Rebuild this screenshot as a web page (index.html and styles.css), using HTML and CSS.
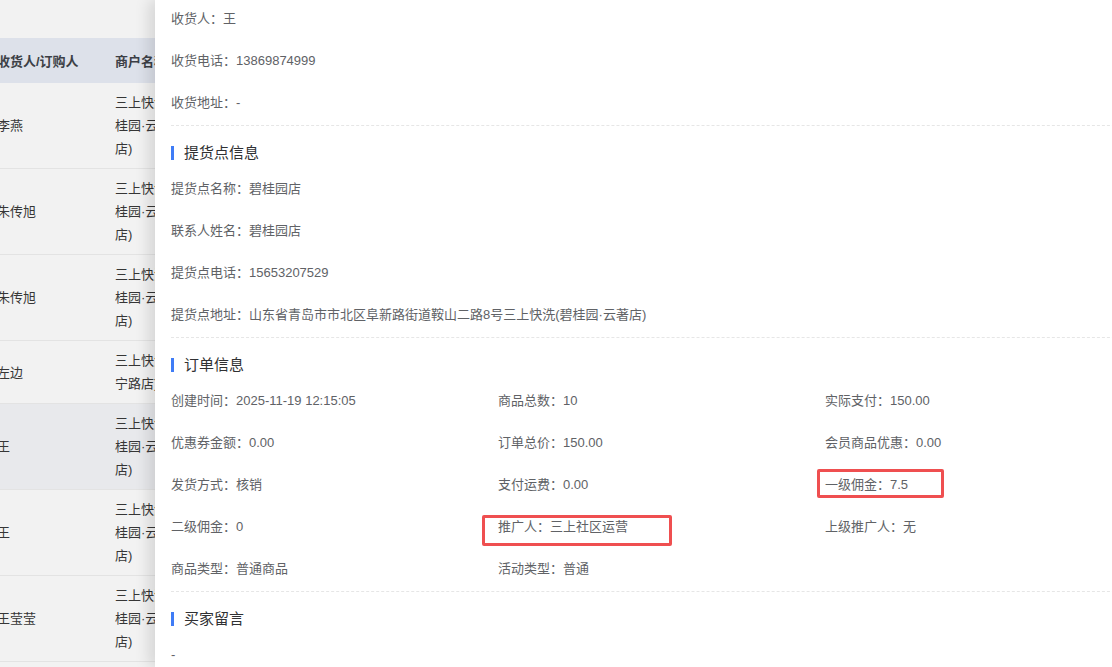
FILE: index.html
```html
<!DOCTYPE html>
<html lang="zh-CN">
  <head>
    <meta charset="UTF-8" />
    <meta name="viewport" content="width=device-width, initial-scale=1.0" />
    <title>订单详情</title>

    <link rel="stylesheet" href="styles.css">
  </head>
  <body>
    <div class="page">
      <table class="orderTable">
        <thead>
          <tr>
            <th class="col-name">收货人/订购人</th>
            <th class="col-shop">商户名称</th>
          </tr>
        </thead>
        <tbody>
          <tr>
            <td class="col-name">李燕</td>
            <td class="col-shop"><div class="shopName">三上快洗(碧桂园·云著店)</div></td>
          </tr>
          <tr>
            <td class="col-name">朱传旭</td>
            <td class="col-shop"><div class="shopName">三上快洗(碧桂园·云著店)</div></td>
          </tr>
          <tr>
            <td class="col-name">朱传旭</td>
            <td class="col-shop"><div class="shopName">三上快洗(碧桂园·云著店)</div></td>
          </tr>
          <tr>
            <td class="col-name">左边</td>
            <td class="col-shop"><div class="shopName">三上快洗(江宁路店)</div></td>
          </tr>
          <tr class="is-hover">
            <td class="col-name">王</td>
            <td class="col-shop"><div class="shopName">三上快洗(碧桂园·云著店)</div></td>
          </tr>
          <tr>
            <td class="col-name">王</td>
            <td class="col-shop"><div class="shopName">三上快洗(碧桂园·云著店)</div></td>
          </tr>
          <tr>
            <td class="col-name">王莹莹</td>
            <td class="col-shop"><div class="shopName">三上快洗(碧桂园·云著店)</div></td>
          </tr>
        </tbody>
      </table>
    </div>

    <div class="drawer">
      <div class="drawer__body">
        <div class="infoList">
          <div class="infoItem">收货人：王</div>
          <div class="infoItem">收货电话：13869874999</div>
          <div class="infoItem">收货地址：-</div>
        </div>
        <div class="divider"></div>

        <div class="sectionTitle">提货点信息</div>
        <div class="infoList">
          <div class="infoItem">提货点名称：碧桂园店</div>
          <div class="infoItem">联系人姓名：碧桂园店</div>
          <div class="infoItem">提货点电话：15653207529</div>
          <div class="infoItem">提货点地址：山东省青岛市市北区阜新路街道鞍山二路8号三上快洗(碧桂园·云著店)</div>
        </div>
        <div class="divider"></div>

        <div class="sectionTitle">订单信息</div>
        <div class="infoList infoGrid">
          <div class="infoItem">创建时间：2025-11-19 12:15:05</div>
          <div class="infoItem">商品总数：10</div>
          <div class="infoItem">实际支付：150.00</div>
          <div class="infoItem">优惠券金额：0.00</div>
          <div class="infoItem">订单总价：150.00</div>
          <div class="infoItem">会员商品优惠：0.00</div>
          <div class="infoItem">发货方式：核销</div>
          <div class="infoItem">支付运费：0.00</div>
          <div class="infoItem">一级佣金：7.5<span class="mark mark--first"></span></div>
          <div class="infoItem">二级佣金：0</div>
          <div class="infoItem">推广人：三上社区运营<span class="mark mark--promoter"></span></div>
          <div class="infoItem">上级推广人：无</div>
          <div class="infoItem">商品类型：普通商品</div>
          <div class="infoItem">活动类型：普通</div>
        </div>
        <div class="divider"></div>

        <div class="sectionTitle">买家留言</div>
        <div class="infoList">
          <div class="infoItem">-</div>
        </div>
      </div>
    </div>
  </body>
</html>
```

FILE: styles.css
```css
html,
body {
  margin: 0;
  height: 100%;
  overflow: hidden;
}

body {
  position: relative;
  background-color: #f2f2f2;
  font-family: "Liberation Sans", "Noto Sans CJK SC", sans-serif;
  font-size: 13px;
}

/* table behind the drawer */
.page {
  padding-top: 38px;
  margin-left: -3px;
}

.orderTable {
  border-collapse: collapse;
  color: #363636;
}

.orderTable th {
  height: 45px;
  padding: 0;
  text-align: left;
  font-weight: 600;
  color: #3c3f46;
  background-color: #dde1ea;
}

.orderTable td {
  padding: 8px 0;
  line-height: 23px;
  border-bottom: 1px solid #e3e3e3;
}

.orderTable tr.is-hover td {
  background-color: #e8e9ec;
}

.col-name {
  width: 118px;
}

.col-shop {
  width: 200px;
}

.shopName {
  width: 72px;
}

/* drawer */
.drawer {
  position: absolute;
  top: 0;
  bottom: 0;
  left: 155px;
  width: 1040px;
  background-color: #ffffff;
  box-shadow: -6px 0 14px rgba(0, 0, 0, 0.12);
}

.drawer__body {
  padding: 9px 0 0 16px;
  color: #606266;
}

.infoList {
  display: flex;
  flex-direction: column;
  gap: 22px;
  margin-bottom: 12px;
}

.infoGrid {
  display: grid;
  grid-template-columns: repeat(3, 327px);
  column-gap: 0;
}

.infoItem {
  position: relative;
  height: 20px;
  line-height: 20px;
  white-space: nowrap;
}

.divider {
  border-top: 1px dashed #e6e6e6;
}

.sectionTitle {
  display: flex;
  align-items: center;
  margin: 17px 0 16px;
  height: 20px;
  line-height: 20px;
  font-size: 15px;
  color: #303133;
}

.sectionTitle::before {
  content: "";
  width: 3px;
  height: 14px;
  margin-right: 10px;
  background-color: #3f7cf6;
}

/* red annotation boxes */
.mark {
  position: absolute;
  border: 3px solid #ef4f50;
  border-radius: 2px;
  box-sizing: border-box;
}

.mark--first {
  left: -8px;
  top: -6px;
  width: 127px;
  height: 29px;
}

.mark--promoter {
  left: -16px;
  top: -2px;
  width: 190px;
  height: 31px;
}
```
